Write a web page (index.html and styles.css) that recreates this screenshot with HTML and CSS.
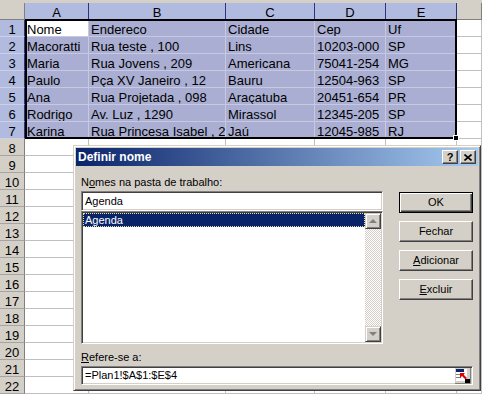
FILE: index.html
```html
<!DOCTYPE html>
<html lang="pt-BR">
<head>
    <meta charset="UTF-8">
    <title>Definir nome</title>
    <link rel="stylesheet" href="styles.css">
</head>
<body>
<div class="sheet">
    <div class="grid">
        <div class="corner"></div>
        <div class="hd on">A</div><div class="hd on">B</div><div class="hd on">C</div><div class="hd on">D</div><div class="hd on">E</div><div class="hd"></div>

        <div class="rh on">1</div><div class="cell active">Nome</div><div class="cell sel">Endereco</div><div class="cell sel">Cidade</div><div class="cell sel">Cep</div><div class="cell sel">Uf</div><div class="cell"></div>
        <div class="rh on">2</div><div class="cell sel">Macoratti</div><div class="cell sel">Rua teste , 100</div><div class="cell sel">Lins</div><div class="cell sel">10203-000</div><div class="cell sel">SP</div><div class="cell"></div>
        <div class="rh on">3</div><div class="cell sel">Maria</div><div class="cell sel">Rua Jovens , 209</div><div class="cell sel">Americana</div><div class="cell sel">75041-254</div><div class="cell sel">MG</div><div class="cell"></div>
        <div class="rh on">4</div><div class="cell sel">Paulo</div><div class="cell sel">Pça XV Janeiro , 12</div><div class="cell sel">Bauru</div><div class="cell sel">12504-963</div><div class="cell sel">SP</div><div class="cell"></div>
        <div class="rh on">5</div><div class="cell sel">Ana</div><div class="cell sel">Rua Projetada , 098</div><div class="cell sel">Araçatuba</div><div class="cell sel">20451-654</div><div class="cell sel">PR</div><div class="cell"></div>
        <div class="rh on">6</div><div class="cell sel">Rodrigo</div><div class="cell sel">Av. Luz , 1290</div><div class="cell sel">Mirassol</div><div class="cell sel">12345-205</div><div class="cell sel">SP</div><div class="cell"></div>
        <div class="rh on">7</div><div class="cell sel">Karina</div><div class="cell sel">Rua Princesa Isabel , 2</div><div class="cell sel">Jaú</div><div class="cell sel">12045-985</div><div class="cell sel">RJ</div><div class="cell"></div>

        <div class="rh">8</div><div class="cell"></div><div class="cell"></div><div class="cell"></div><div class="cell"></div><div class="cell"></div><div class="cell"></div>
        <div class="rh">9</div><div class="cell"></div><div class="cell"></div><div class="cell"></div><div class="cell"></div><div class="cell"></div><div class="cell"></div>
        <div class="rh">10</div><div class="cell"></div><div class="cell"></div><div class="cell"></div><div class="cell"></div><div class="cell"></div><div class="cell"></div>
        <div class="rh">11</div><div class="cell"></div><div class="cell"></div><div class="cell"></div><div class="cell"></div><div class="cell"></div><div class="cell"></div>
        <div class="rh">12</div><div class="cell"></div><div class="cell"></div><div class="cell"></div><div class="cell"></div><div class="cell"></div><div class="cell"></div>
        <div class="rh">13</div><div class="cell"></div><div class="cell"></div><div class="cell"></div><div class="cell"></div><div class="cell"></div><div class="cell"></div>
        <div class="rh">14</div><div class="cell"></div><div class="cell"></div><div class="cell"></div><div class="cell"></div><div class="cell"></div><div class="cell"></div>
        <div class="rh">15</div><div class="cell"></div><div class="cell"></div><div class="cell"></div><div class="cell"></div><div class="cell"></div><div class="cell"></div>
        <div class="rh">16</div><div class="cell"></div><div class="cell"></div><div class="cell"></div><div class="cell"></div><div class="cell"></div><div class="cell"></div>
        <div class="rh">17</div><div class="cell"></div><div class="cell"></div><div class="cell"></div><div class="cell"></div><div class="cell"></div><div class="cell"></div>
        <div class="rh">18</div><div class="cell"></div><div class="cell"></div><div class="cell"></div><div class="cell"></div><div class="cell"></div><div class="cell"></div>
        <div class="rh">19</div><div class="cell"></div><div class="cell"></div><div class="cell"></div><div class="cell"></div><div class="cell"></div><div class="cell"></div>
        <div class="rh">20</div><div class="cell"></div><div class="cell"></div><div class="cell"></div><div class="cell"></div><div class="cell"></div><div class="cell"></div>
        <div class="rh">21</div><div class="cell"></div><div class="cell"></div><div class="cell"></div><div class="cell"></div><div class="cell"></div><div class="cell"></div>
        <div class="rh">22</div><div class="cell"></div><div class="cell"></div><div class="cell"></div><div class="cell"></div><div class="cell"></div><div class="cell"></div>
    </div>

    <!-- selected range A1:E7 -->
    <div class="range"><span class="handle"></span></div>

    <!-- Definir nome dialog -->
    <div class="dialog">
        <div class="titlebar">
            <span class="title">Definir nome</span>
            <span class="tbtn help">?</span>
            <span class="tbtn">
                <svg width="8" height="7" viewBox="0 0 8 7"><path d="M0.5 0.5L7.5 6.5M7.5 0.5L0.5 6.5" stroke="#000" stroke-width="1.6"/></svg>
            </span>
        </div>
        <div class="dlg-body">
            <div class="dlg-top">
                <div class="names">
                    <div class="dlg-label">N<u>o</u>mes na pasta de trabalho:</div>
                    <div class="field name-field">Agenda</div>
                    <div class="list">
                        <div class="items">
                            <div class="item active">Agenda</div>
                        </div>
                        <div class="scroll">
                            <div class="arrow up"><span></span></div>
                            <div class="track"></div>
                            <div class="arrow down"><span></span></div>
                        </div>
                    </div>
                </div>
                <div class="buttons">
                    <div class="btn default">OK</div>
                    <div class="btn">Fechar</div>
                    <div class="btn"><u>A</u>dicionar</div>
                    <div class="btn"><u>E</u>xcluir</div>
                </div>
            </div>
            <div class="refers">
                <div class="dlg-label"><u>R</u>efere-se a:</div>
                <div class="field ref-field">
                    <span>=Plan1!$A$1:$E$4</span>
                    <span class="collapse">
                        <svg width="16" height="16" viewBox="0 0 16 16">
                            <rect x="0" y="0" width="16" height="16" fill="#d4d0c8"/>
                            <rect x="1" y="1" width="11" height="12" fill="#fff"/>
                            <rect x="1" y="1" width="8" height="3" fill="#0a246a"/>
                            <path d="M1 6.5H9M1 9.5H6" stroke="#808080"/>
                            <path d="M5 5L10 5L8.5 6.5L12 10L10.5 11.5L7 8L5 10Z" fill="#e00000"/>
                            <rect x="10" y="11" width="5" height="4" fill="#000"/>
                            <path d="M0 15.5H15.5V0" stroke="#808080" fill="none"/>
                        </svg>
                    </span>
                </div>
            </div>
        </div>
    </div>
</div>
</body>
</html>
```

FILE: styles.css
```css
/* Global */
* {
    box-sizing: border-box;
    margin: 0;
    padding: 0;
}

body {
    width: 482px;
    height: 394px;
    overflow: hidden;
    font-family: "Liberation Sans", Arial, sans-serif;
}

/* Worksheet */
.sheet {
    position: relative;
    height: 394px;
    padding-top: 3px;
    background-color: #d4d0c8;
    overflow: hidden;
}

.grid {
    display: grid;
    grid-template-columns: 25px 64px 137px 89px 71px 71px 25px;
    grid-auto-rows: 17px;
    font-size: 13px;
    color: #000;
}

.grid > div {
    padding: 2px 0 0 2px;
    line-height: 15px;
    white-space: nowrap;
    overflow: hidden;
    border-right: 1px solid #c0c0c0;
    border-bottom: 1px solid #c0c0c0;
    background-color: #fff;
}

.grid > .corner,
.grid > .hd,
.grid > .rh {
    padding-left: 0;
    text-align: center;
    background-color: #d4d0c8;
    border-right-color: #808080;
    border-bottom-color: #808080;
}

.grid > .rh {
    border-bottom-color: #a4a4a4;
}

.grid > .hd.on {
    background-color: #b1badf;
    border-right-color: #2a3680;
    border-bottom-color: #2a3680;
}

.grid > .rh.on {
    background-color: #b1badf;
    border-right-color: #2a3680;
    border-bottom-color: #cdd1e6;
}

.grid > .cell.sel {
    background-color: #a9aed2;
    border-right-color: #c6c9df;
    border-bottom-color: #c6c9df;
}

.grid > .cell.active {
    background-color: #fff;
    border-right-color: #c6c9df;
    border-bottom-color: #c6c9df;
}

.range {
    position: absolute;
    left: 25px;
    top: 19px;
    width: 432px;
    height: 120px;
    border: 2px solid #000;
}

.handle {
    position: absolute;
    right: -4px;
    bottom: -4px;
    width: 6px;
    height: 6px;
    background-color: #000;
    border: 1px solid #fff;
}

/* Dialog window */
.dialog {
    position: absolute;
    left: 73px;
    top: 145px;
    width: 408px;
    height: 246px;
    display: flex;
    flex-direction: column;
    padding: 2px;
    font-size: 11px;
    background-color: #d4d0c8;
    border: 1px solid;
    border-color: #d4d0c8 #404040 #404040 #d4d0c8;
    box-shadow: inset 1px 1px #fff, inset -1px -1px #808080;
}

.titlebar {
    height: 18px;
    display: flex;
    align-items: center;
    gap: 2px;
    padding: 0 2px 0 2px;
    background: linear-gradient(to right, #0a246a, #a6caf0);
}

.title {
    flex: 1;
    color: #fff;
    font-size: 12px;
    font-weight: bold;
}

.tbtn {
    width: 16px;
    height: 14px;
    display: flex;
    align-items: center;
    justify-content: center;
    background-color: #d4d0c8;
    border: 1px solid;
    border-color: #fff #404040 #404040 #fff;
    box-shadow: inset -1px -1px #808080;
}

.tbtn.help {
    font-size: 11px;
    font-weight: bold;
    line-height: 12px;
}

.dlg-body {
    padding: 10px 5px 0 5px;
}

.dlg-top {
    display: flex;
    gap: 16px;
}

.names {
    width: 302px;
}

.dlg-label {
    height: 13px;
    line-height: 13px;
    margin-bottom: 2px;
    color: #000;
}

/* Sunken fields */
.field,
.list {
    background-color: #fff;
    border: 1px solid;
    border-color: #808080 #fff #fff #808080;
    box-shadow: inset 1px 1px #404040, inset -1px -1px #d4d0c8;
}

.field {
    padding: 0 3px;
    white-space: nowrap;
}

.name-field {
    height: 20px;
    line-height: 18px;
}

.list {
    height: 133px;
    display: flex;
    padding: 1px;
}

.items {
    flex: 1;
}

.item {
    height: 14px;
    line-height: 12px;
    padding-left: 1px;
}

.item.active {
    color: #fff;
    background-color: #0a246a;
    border: 1px dotted #e8e0a0;
}

.scroll {
    width: 16px;
    display: flex;
    flex-direction: column;
}

.track {
    flex: 1;
    background: repeating-conic-gradient(#fff 0 25%, #d4d0c8 0 50%) 0 0 / 2px 2px;
}

.arrow {
    height: 16px;
    display: flex;
    align-items: center;
    justify-content: center;
    background-color: #d4d0c8;
    border: 1px solid;
    border-color: #d4d0c8 #404040 #404040 #d4d0c8;
    box-shadow: inset 1px 1px #fff, inset -1px -1px #808080;
}

.arrow span {
    width: 0;
    height: 0;
    border-left: 4px solid transparent;
    border-right: 4px solid transparent;
}

.arrow.up span {
    border-bottom: 4px solid #808080;
}

.arrow.down span {
    border-top: 4px solid #808080;
}

/* Buttons */
.buttons {
    width: 74px;
    padding-top: 16px;
    display: flex;
    flex-direction: column;
    gap: 8px;
}

.btn {
    height: 21px;
    line-height: 19px;
    text-align: center;
    color: #000;
    background-color: #d4d0c8;
    border: 1px solid;
    border-color: #fff #404040 #404040 #fff;
    box-shadow: inset -1px -1px #808080;
}

.btn.default {
    border-color: #000;
    box-shadow: inset 1px 1px #fff, inset -1px -1px #404040, inset -2px -2px #808080;
}

/* Refere-se a */
.refers {
    margin-top: 7px;
}

.ref-field {
    height: 19px;
    line-height: 17px;
    display: flex;
    align-items: center;
    justify-content: space-between;
    padding-right: 1px;
}

.collapse {
    display: flex;
    height: 16px;
}
```
